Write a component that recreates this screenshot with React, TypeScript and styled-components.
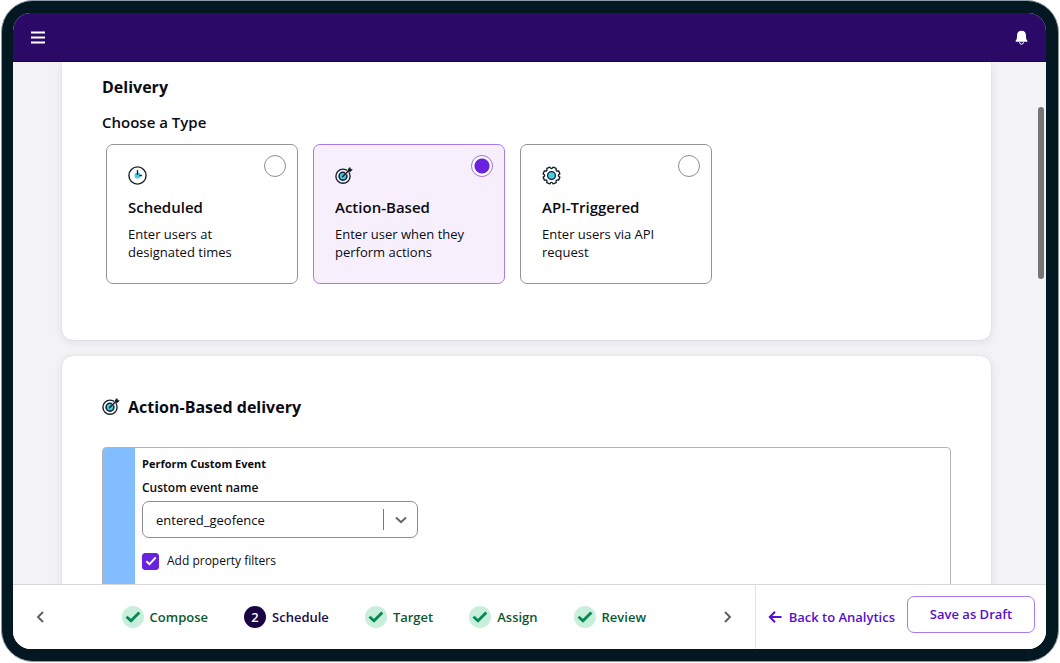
import React, { useState } from 'react';
import styled, { createGlobalStyle } from 'styled-components';

const GlobalStyle = createGlobalStyle`
  *, *::before, *::after { box-sizing: border-box; }
  body {
    margin: 0;
    background: #ffffff;
    color: #0b0b12;
    font-family: 'Open Sans', 'Noto Sans', sans-serif;
    font-size: 13px;
    line-height: 18px;
  }
  button, select, input { font: inherit; color: inherit; margin: 0; }
  h1, h2, h3, p, fieldset, legend { margin: 0; padding: 0; border: 0; }
`;

const Page = styled.div`
  height: 100vh;
  min-height: 420px;
  padding: 0 1px 1px;
`;

const Device = styled.div`
  height: 100%;
  padding: 12px 12px 12px 11px;
  border: 1px solid #8c9da8;
  border-radius: 32px;
  background: #041822;
`;

const Screen = styled.div`
  position: relative;
  display: flex;
  flex-direction: column;
  height: 100%;
  overflow: hidden;
  border-radius: 18px;
  background: #ffffff;
`;

const TopBar = styled.header`
  flex: none;
  display: flex;
  align-items: center;
  justify-content: space-between;
  height: 49px;
  padding: 0 17px 0 18px;
  background: #2a0a66;
  border-bottom: 1px solid #1b0550;
  color: #ffffff;
`;

const IconButton = styled.button`
  display: flex;
  padding: 0;
  border: 0;
  background: none;
  color: inherit;
  cursor: pointer;
`;

const Content = styled.main`
  flex: 1;
  min-height: 0;
  overflow: hidden;
  padding: 0 55px 0 49px;
  background: #f3f3f6;
`;

const ScrollThumb = styled.div`
  position: absolute;
  top: 94px;
  right: 2px;
  width: 6px;
  height: 172px;
  border-radius: 3px;
  background: #757575;
`;

const Panel = styled.section<{ $continued?: boolean }>`
  margin-bottom: 16px;
  padding: ${(p) => (p.$continued ? '14px 40px 56px' : '40px 40px 40px')};
  border-radius: ${(p) => (p.$continued ? '0 0 10px 10px' : '10px')};
  background: #ffffff;
  box-shadow: 0 0 1px rgba(30, 20, 70, 0.25), 0 2px 10px rgba(30, 20, 70, 0.09);
`;

const Heading = styled.h2`
  display: flex;
  align-items: center;
  gap: 8px;
  font-size: 16px;
  font-weight: 700;
  line-height: 22px;
`;

const TypeGroup = styled.fieldset`
  min-width: 0;
`;

const GroupTitle = styled.legend`
  padding-top: 14px;
  font-size: 15px;
  font-weight: 600;
  line-height: 20px;
`;

const TypeList = styled.div`
  display: flex;
  gap: 15px;
  padding: 12px 4px 0;
`;

const TypeCard = styled.label<{ $selected: boolean }>`
  flex: 0 1 192px;
  min-height: 140px;
  padding: 10px 11px 10px 21px;
  border: 1px solid ${(p) => (p.$selected ? '#a47bf0' : '#949494')};
  border-radius: 7px;
  background: ${(p) => (p.$selected ? '#f7f0fc' : '#ffffff')};
  cursor: pointer;
`;

const TypeTop = styled.span`
  display: flex;
  align-items: flex-start;
  justify-content: space-between;
  height: 30px;

  svg { align-self: flex-end; }
`;

const TypeName = styled.span`
  display: block;
  margin-top: 12px;
  font-size: 15px;
  font-weight: 600;
  line-height: 20px;
`;

const TypeText = styled.span`
  display: block;
  max-width: 140px;
  margin-top: 8px;
`;

const Radio = styled.input`
  appearance: none;
  width: 22px;
  height: 22px;
  border: 1px solid #8d8d8d;
  border-radius: 50%;
  background: #ffffff;

  &:checked {
    border-color: #9a70ec;
    background: radial-gradient(circle, #6a22df 7px, #ffffff 8px);
  }
`;

const EventBox = styled.div`
  display: flex;
  margin-top: 29px;
  border: 1px solid #b4b4b4;
  border-radius: 4px;
  overflow: hidden;
`;

const Stripe = styled.div`
  flex: none;
  width: 32px;
  background: #82beff;
`;

const EventForm = styled.div`
  flex: 1;
  padding: 8px 7px 60px;
`;

const EventTitle = styled.h3`
  font-size: 11px;
  font-weight: 700;
  line-height: 16px;
`;

const FieldLabel = styled.label`
  display: block;
  margin: 7px 0 4px;
  font-size: 12px;
  font-weight: 600;
  line-height: 18px;
`;

const SelectWrap = styled.div`
  display: grid;
  width: 276px;
  max-width: 100%;
  align-items: center;

  > * { grid-area: 1 / 1; }
`;

const Select = styled.select`
  appearance: none;
  width: 100%;
  height: 37px;
  padding: 0 48px 0 13px;
  border: 1px solid #8d8d8d;
  border-radius: 7px;
  background: #ffffff;
`;

const SelectMark = styled.span`
  justify-self: end;
  display: flex;
  align-items: center;
  justify-content: center;
  width: 35px;
  height: 21px;
  border-left: 1px solid #777777;
  color: #62626a;
  pointer-events: none;
`;

const CheckLabel = styled.label`
  display: flex;
  align-items: center;
  gap: 8px;
  margin-top: 13px;
  font-size: 12px;
  line-height: 20px;
`;

const CheckBox = styled.span`
  display: grid;
  place-items: center;
  color: #ffffff;

  > * { grid-area: 1 / 1; }
  > svg { pointer-events: none; }
`;

const CheckInput = styled.input`
  appearance: none;
  width: 17px;
  height: 17px;
  border: 1px solid #6a22df;
  border-radius: 3px;
  background: #ffffff;

  &:checked { background: #6a22df; }
`;

const BottomBar = styled.footer`
  flex: none;
  display: flex;
  height: 65px;
  border-top: 1px solid #d9d9dc;
  background: #ffffff;
`;

const StepNav = styled.nav`
  flex: 1;
  display: flex;
  align-items: center;
  justify-content: space-between;
  padding: 0 22px;
  color: #5c5c64;
`;

const Steps = styled.ol`
  display: flex;
  gap: 36px;
  margin: 0;
  padding: 0;
  list-style: none;
`;

const StepLink = styled.a<{ $current?: boolean }>`
  display: flex;
  align-items: center;
  gap: 6px;
  color: ${(p) => (p.$current ? '#1c0a4d' : '#0b5a2e')};
  font-weight: 600;
  text-decoration: none;
`;

const StepMark = styled.span<{ $current?: boolean }>`
  display: grid;
  place-items: center;
  width: 22px;
  height: 22px;
  border-radius: 50%;
  background: ${(p) => (p.$current ? '#1a0542' : '#c8eedc')};
  color: ${(p) => (p.$current ? '#ffffff' : '#078a4f')};
`;

const Actions = styled.div`
  flex: none;
  display: flex;
  align-items: center;
  gap: 12px;
  padding: 0 11px 6px 12px;
  border-left: 1px solid #e3e3e6;
`;

const BackLink = styled.a`
  display: flex;
  align-items: center;
  gap: 7px;
  padding-top: 6px;
  color: #5710cf;
  font-weight: 600;
  text-decoration: none;
`;

const SaveButton = styled.button`
  width: 128px;
  height: 37px;
  padding: 0;
  border: 1px solid #a47bf0;
  border-radius: 7px;
  background: #ffffff;
  color: #5710cf;
  font-weight: 600;
  cursor: pointer;
`;

const ClockIcon = () => (
  <svg width="19" height="19" viewBox="0 0 19 19" fill="none" aria-hidden="true">
    <circle cx="9.5" cy="9.5" r="8.6" stroke="#15202e" strokeWidth="1.4" />
    <circle cx="9.5" cy="9.5" r="3" fill="#45cfe2" />
    <path d="M9.5 4v5" stroke="#15202e" strokeWidth="1.3" />
    <path d="M11.5 9.500h2.500" stroke="#15202e" strokeWidth="1.300" />
  </svg>
);

const TargetIcon = () => (
  <svg width="18" height="18" viewBox="0 0 18 18" fill="none" aria-hidden="true">
    <circle cx="8" cy="9.2" r="7.1" stroke="#15202e" strokeWidth="1.4" />
    <circle cx="8" cy="9.2" r="3.9" fill="#45cfe2" stroke="#15202e" strokeWidth="1.6" />
    <path d="M10.600 6.600 14.500 2.700" stroke="#ffffff" strokeWidth="2.600" />
    <path d="M7.600 9.600 14.500 2.700" stroke="#15202e" strokeWidth="1.500" strokeLinecap="round" />
    <path d="M13.200 4.200 13 2.300 15 .4l.5 1.700 1.800.600-2 2z" fill="#15202e" stroke="#15202e" strokeWidth=".6" />
  </svg>
);

const gearPath = Array.from({ length: 8 }, (_, i) => {
  const at = (deg: number, r: number) => {
    const a = ((i * 45 + 22.5 + deg) * Math.PI) / 180;
    return `${(9.5 + r * Math.cos(a)).toFixed(2)} ${(9.5 + r * Math.sin(a)).toFixed(2)}`;
  };
  return `${i ? 'L' : 'M'}${at(-11, 8.5)}L${at(11, 8.5)}Q${at(22.5, 5.4)} ${at(34, 8.5)}`;
}).join('');

const GearIcon = () => (
  <svg width="19" height="19" viewBox="0 0 19 19" fill="none" aria-hidden="true">
    <path d={`${gearPath}Z`} stroke="#15202e" strokeWidth="1.4" strokeLinejoin="round" />
    <circle cx="9.5" cy="9.5" r="3.9" fill="#45cfe2" stroke="#15202e" strokeWidth="1.3" />
  </svg>
);

const Chevron = ({ d, w, h }: { d: string; w: number; h: number }) => (
  <svg width={w} height={h} viewBox={`0 0 ${w} ${h}`} fill="none" stroke="currentColor" strokeWidth="1.9" aria-hidden="true">
    <path d={d} />
  </svg>
);

const types = [
  { id: 'scheduled', name: 'Scheduled', text: 'Enter users at designated times', icon: <ClockIcon /> },
  { id: 'action', name: 'Action-Based', text: 'Enter user when they perform actions', icon: <TargetIcon /> },
  { id: 'api', name: 'API-Triggered', text: 'Enter users via API request', icon: <GearIcon /> },
];

const steps = ['Compose', 'Schedule', 'Target', 'Assign', 'Review'];
const currentStep = 1;

export default function App() {
  const [type, setType] = useState('action');

  return (
    <Page>
      <GlobalStyle />
      <Device>
        <Screen>
          <TopBar>
            <IconButton aria-label="Menu">
              <svg width="14" height="13" viewBox="0 0 14 13" stroke="#fff" strokeWidth="2.2" aria-hidden="true">
                <path d="M0 1.500h14M0 6.500h14M0 11.500h14" />
              </svg>
            </IconButton>
            <IconButton aria-label="Notifications">
              <svg width="15" height="15" viewBox="0 0 15 15" fill="#fff" aria-hidden="true">
                <path d="M7.5.8C4.6.8 3 2.9 3 5.4c0 2.6-.3 4-1.200 5.200-.4.5-.2 1.200.5 1.200h10.400c.7 0 .9-.7.5-1.200-.9-1.200-1.200-2.600-1.200-5.200C12 2.900 10.400.8 7.500.8z" />
                <path d="M5.500 12.200a2 2 0 0 0 4 0" fill="none" stroke="#fff" strokeWidth="1" />
              </svg>
            </IconButton>
          </TopBar>

          <Content>
            <Panel $continued>
              <Heading>Delivery</Heading>
              <TypeGroup>
                <GroupTitle>Choose a Type</GroupTitle>
                <TypeList>
                  {types.map((t) => (
                    <TypeCard key={t.id} $selected={t.id === type}>
                      <TypeTop>
                        {t.icon}
                        <Radio type="radio" name="delivery-type" checked={t.id === type} onChange={() => setType(t.id)} />
                      </TypeTop>
                      <TypeName>{t.name}</TypeName>
                      <TypeText>{t.text}</TypeText>
                    </TypeCard>
                  ))}
                </TypeList>
              </TypeGroup>
            </Panel>

            <Panel>
              <Heading>
                <TargetIcon />
                Action-Based delivery
              </Heading>
              <EventBox>
                <Stripe />
                <EventForm>
                  <EventTitle>Perform Custom Event</EventTitle>
                  <FieldLabel htmlFor="event-name">Custom event name</FieldLabel>
                  <SelectWrap>
                    <Select id="event-name" defaultValue="entered_geofence">
                      <option value="entered_geofence">entered_geofence</option>
                    </Select>
                    <SelectMark>
                      <Chevron w={12} h={8} d="M1 1.500 6 6.300l5-4.800" />
                    </SelectMark>
                  </SelectWrap>
                  <CheckLabel>
                    <CheckBox>
                      <CheckInput type="checkbox" defaultChecked />
                      <Chevron w={12} h={10} d="M1.300 5.200 4.500 8.200 10.700 1.500" />
                    </CheckBox>
                    Add property filters
                  </CheckLabel>
                </EventForm>
              </EventBox>
            </Panel>
          </Content>
          <ScrollThumb />

          <BottomBar>
            <StepNav aria-label="Steps">
              <IconButton aria-label="Previous step">
                <Chevron w={12} h={12} d="M8 1 3 6l5 5" />
              </IconButton>
              <Steps>
                {steps.map((s, i) => (
                  <li key={s}>
                    <StepLink href="#" $current={i === currentStep} aria-current={i === currentStep ? 'step' : undefined}>
                      <StepMark $current={i === currentStep}>
                        {i === currentStep ? (
                          i + 1
                        ) : (
                          <svg width="16" height="12" viewBox="0 0 16 12" fill="none" stroke="currentColor" strokeWidth="2.800" aria-hidden="true">
                            <path d="M1.500 5.800 6 9.800 14.300 1.500" />
                          </svg>
                        )}
                      </StepMark>
                      {s}
                    </StepLink>
                  </li>
                ))}
              </Steps>
              <IconButton aria-label="Next step">
                <Chevron w={12} h={12} d="M4 1l5 5-5 5" />
              </IconButton>
            </StepNav>
            <Actions>
              <BackLink href="#">
                <svg width="14" height="12" viewBox="0 0 14 12" fill="none" stroke="currentColor" strokeWidth="2" aria-hidden="true">
                  <path d="M13.500 6H1.800M7 .8 1.800 6 7 11.200" />
                </svg>
                Back to Analytics
              </BackLink>
              <SaveButton>Save as Draft</SaveButton>
            </Actions>
          </BottomBar>
        </Screen>
      </Device>
    </Page>
  );
}
